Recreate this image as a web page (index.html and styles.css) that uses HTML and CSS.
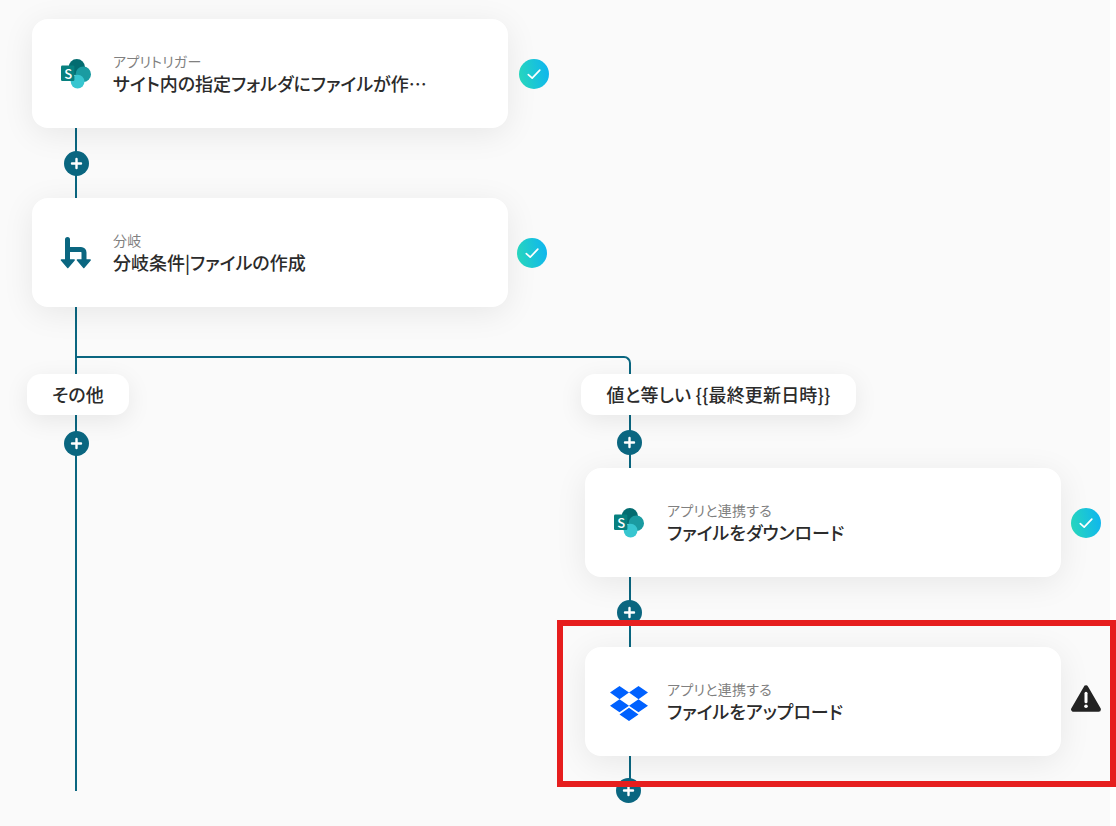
FILE: index.html
```html
<!DOCTYPE html>
<html lang="ja">
<head>
<meta charset="utf-8">
<title>フロー</title>
<link rel="stylesheet" href="styles.css">
</head>
<body>
<svg width="0" height="0" class="defs">
  <defs>
    <linearGradient id="chk" x1="0" y1="0.6" x2="1" y2="0.4">
      <stop offset="0" stop-color="#27d6bd"/><stop offset="1" stop-color="#0fb6ee"/>
    </linearGradient>
    <symbol id="sp" viewBox="0 0 30 30">
      <circle cx="15.8" cy="8.2" r="8.2" fill="#036c70"/>
      <circle cx="22.3" cy="15.3" r="7.7" fill="#1a9ba1"/>
      <circle cx="16.6" cy="22.6" r="6.9" fill="#37c6d0"/>
      <rect x="0" y="6.6" width="13.4" height="15.4" rx="1.2" fill="#07807f"/>
    </symbol>
    <symbol id="plus" viewBox="0 0 25 25">
      <circle cx="12.5" cy="12.5" r="12.5" fill="#0a6680"/>
      <path d="M12.5 8v9M8 12.5h9" stroke="#fff" stroke-width="2.4" stroke-linecap="round"/>
    </symbol>
    <symbol id="check" viewBox="0 0 30 30">
      <circle cx="15" cy="15" r="15" fill="url(#chk)"/>
      <path d="M9.3 15.6l3.9 3.6 7.6-8" fill="none" stroke="#fff" stroke-width="1.7" stroke-linecap="round" stroke-linejoin="round"/>
    </symbol>
  </defs>
</svg>

<main class="canvas">
  <div class="line v1"></div>
  <div class="line v2"></div>
  <div class="line h1"></div>
  <div class="corner"></div>

  <section class="card c1">
    <span class="icon"><svg class="sp"><use href="#sp"/></svg><b class="sp-s">S</b></span>
    <div class="txt"><p class="label">アプリトリガー</p><p class="title">サイト内の指定フォルダにファイルが作…</p></div>
  </section>
  <section class="card c2">
    <span class="icon">
      <svg width="32" height="33" viewBox="0 0 32 33"><path d="M7.5 3.6V26M7.5 13.5H21a3 3 0 0 1 3 3V26" fill="none" stroke="#0a6680" stroke-width="5" stroke-linecap="round"/><path d="M1.4 24h12.8l-6.4 7.6zM17.4 24h12.8l-6.4 7.6z" fill="#0a6680" stroke="#0a6680" stroke-width="1.4" stroke-linejoin="round"/></svg>
    </span>
    <div class="txt"><p class="label">分岐</p><p class="title">分岐条件|ファイルの作成</p></div>
  </section>
  <section class="card c3">
    <span class="icon"><svg class="sp"><use href="#sp"/></svg><b class="sp-s">S</b></span>
    <div class="txt"><p class="label">アプリと連携する</p><p class="title">ファイルをダウンロード</p></div>
  </section>
  <section class="card c4">
    <span class="icon icon-low">
      <svg width="38" height="35" viewBox="0 1.8 24 20.4" preserveAspectRatio="none"><path fill="#0061ff" d="M6 1.807L0 5.629l6 3.822 6.001-3.822L6 1.807zM18 1.807l-6 3.822 6 3.822 6-3.822-6-3.822zM0 13.274l6 3.822 6.001-3.822L6 9.452l-6 3.822zM18 9.452l-6 3.822 6 3.822 6-3.822-6-3.822zM6 18.371l6.001 3.822 6-3.822-6-3.822L6 18.371z"/></svg>
    </span>
    <div class="txt"><p class="label">アプリと連携する</p><p class="title">ファイルをアップロード</p></div>
  </section>

  <div class="pill p1">その他</div>
  <div class="pill p2">値と等しい {{最終更新日時}}</div>

  <svg class="plus a1"><use href="#plus"/></svg>
  <svg class="plus a2"><use href="#plus"/></svg>
  <svg class="plus a3"><use href="#plus"/></svg>
  <svg class="plus a4"><use href="#plus"/></svg>
  <svg class="plus a5"><use href="#plus"/></svg>

  <svg class="status s1"><use href="#check"/></svg>
  <svg class="status s2"><use href="#check"/></svg>
  <svg class="status s3"><use href="#check"/></svg>
  <svg class="warn" viewBox="0 0 30 27"><path d="M15 2.6L2.4 24.4h25.2z" fill="#222" stroke="#222" stroke-width="4.6" stroke-linejoin="round"/><path d="M15 8.2v8.6" stroke="#fff" stroke-width="3" stroke-linecap="round"/><circle cx="15" cy="21.2" r="1.8" fill="#fff"/></svg>
</main>

<div class="highlight"></div>
</body>
</html>
```

FILE: styles.css
```css
* { box-sizing: border-box; }
html, body { margin: 0; padding: 0; background: #fff; }
body {
  position: relative;
  width: 1116px;
  height: 826px;
  overflow: hidden;
  font-family: "Noto Sans CJK JP", "Noto Sans", sans-serif;
  font-feature-settings: "palt";
  color: #2b2b2b;
}
.defs { position: absolute; }
.canvas {
  position: relative;
  width: 1110px;
  height: 826px;
  background: #fafafa;
}
.line { position: absolute; background: #0a6680; }
.v1 { left: 75px; top: 100px; width: 2px; height: 691px; }
.v2 { left: 629px; top: 364px; width: 2px; height: 420px; }
.h1 { left: 76px; top: 356px; width: 547px; height: 2px; }
.corner {
  position: absolute;
  left: 621px;
  top: 356px;
  width: 10px;
  height: 10px;
  border-top: 2px solid #0a6680;
  border-right: 2px solid #0a6680;
  border-top-right-radius: 7px;
}
.card {
  position: absolute;
  display: flex;
  align-items: center;
  width: 476px;
  height: 109px;
  padding-left: 24px;
  background: #fff;
  border-radius: 16px;
  box-shadow: 0 6px 32px rgba(0, 0, 0, .08);
}
.c1 { left: 32px; top: 19px; }
.c2 { left: 32px; top: 198px; }
.c3 { left: 585px; top: 468px; }
.c4 { left: 585px; top: 647px; }
.icon {
  position: relative;
  flex: none;
  display: flex;
  align-items: center;
  justify-content: center;
  width: 40px;
  height: 36px;
  margin-right: 17px;
}
.icon-low { padding-top: 2px; height: 40px; margin-top: 2px; }
.c3 .icon, .c4 .icon { margin-right: 18px; }
.sp { width: 30px; height: 30px; }
.sp-s {
  position: absolute;
  left: 5.6px;
  top: 10px;
  width: 13.4px;
  text-align: center;
  color: #fff;
  font-size: 13px;
  line-height: 16px;
  font-weight: 500;
}
.txt { min-width: 0; width: 340px; padding-bottom: 1px; }
.label {
  margin: 0;
  font-size: 14px;
  line-height: 19px;
  letter-spacing: .25px;
  color: #808080;
}
.title {
  margin: 0;
  font-size: 18px;
  line-height: 24px;
  font-weight: 500;
  white-space: nowrap;
}
.pill {
  position: absolute;
  top: 374px;
  height: 41px;
  padding-bottom: 2px;
  display: flex;
  align-items: center;
  justify-content: center;
  background: #fff;
  border-radius: 14px;
  font-size: 18px;
  letter-spacing: .15px;
  font-weight: 500;
  white-space: nowrap;
  box-shadow: 0 6px 24px rgba(0, 0, 0, .08);
}
.p1 { left: 27px; width: 102px; }
.p2 { left: 581px; width: 275px; }
.plus { position: absolute; width: 25px; height: 25px; }
.a1 { left: 63.5px; top: 151px; }
.a2 { left: 63.5px; top: 431px; }
.a3 { left: 617px; top: 430px; }
.a4 { left: 616.5px; top: 600px; }
.a5 { left: 616px; top: 778px; }
.status { position: absolute; width: 30px; height: 30px; }
.s1 { left: 519px; top: 59px; }
.s2 { left: 517px; top: 238px; }
.s3 { left: 1071px; top: 508px; }
.warn { position: absolute; left: 1071px; top: 685px; width: 30px; height: 27px; }
.highlight {
  position: absolute;
  left: 557px;
  top: 620px;
  width: 559px;
  height: 167px;
  border: 6px solid #e61e1e;
}
```
